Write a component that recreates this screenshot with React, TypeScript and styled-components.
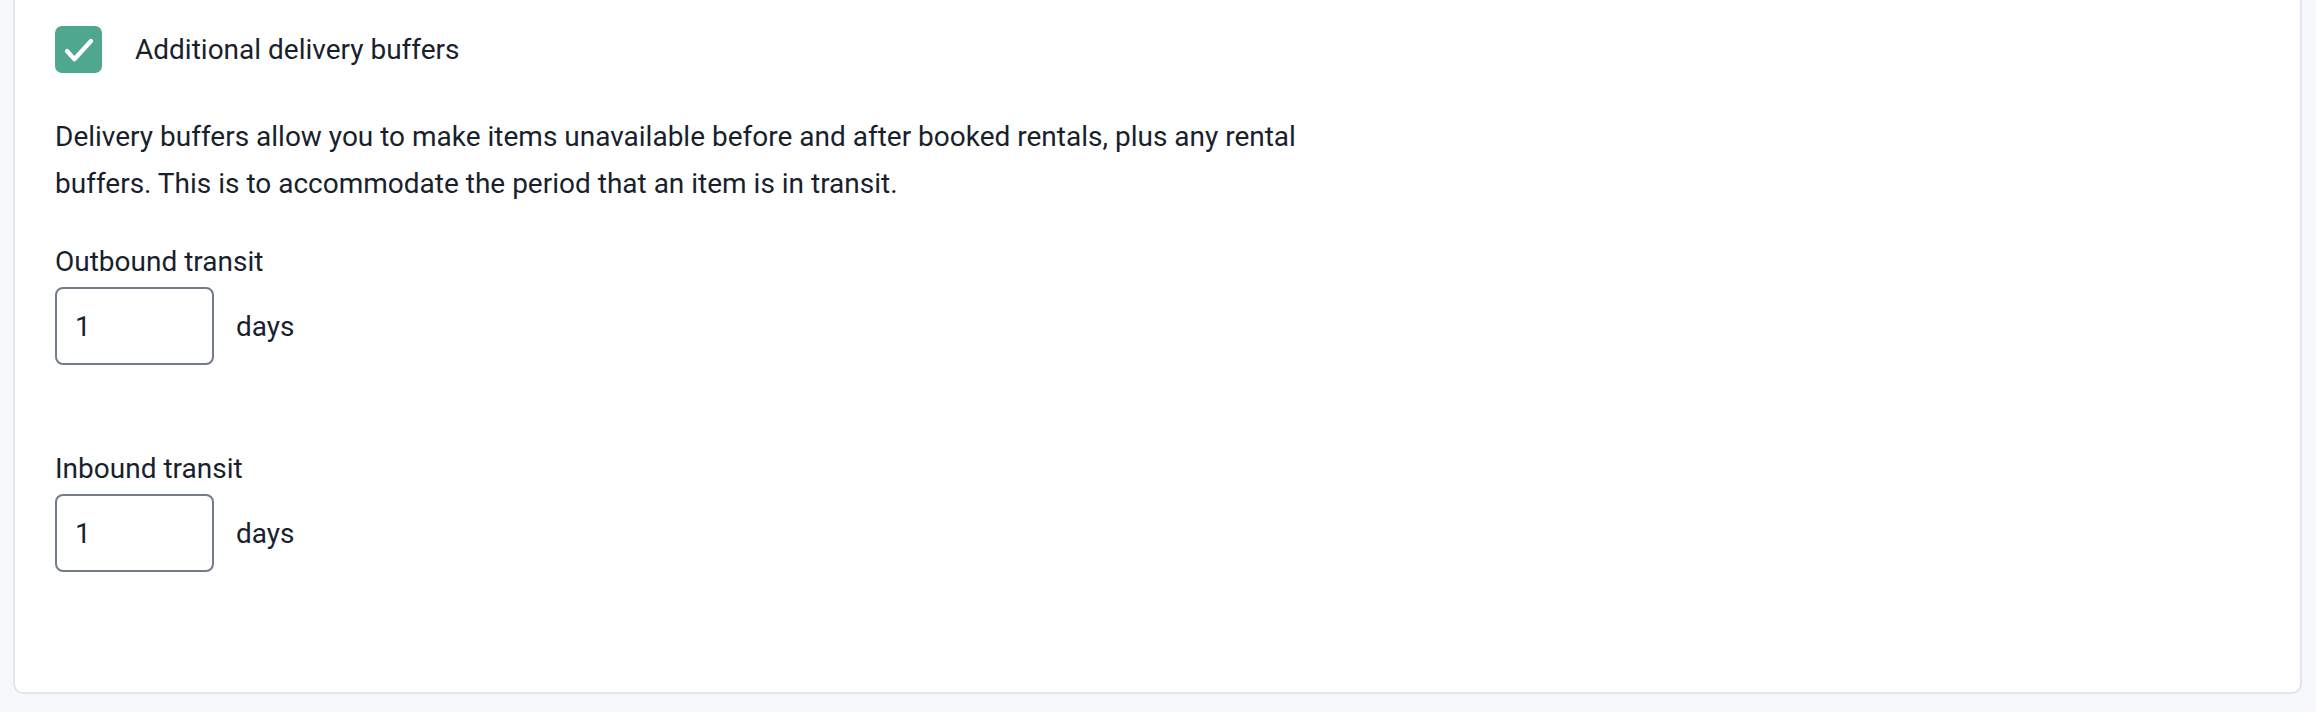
import React from "react";
import styled, { createGlobalStyle } from "styled-components";

const GlobalStyle = createGlobalStyle`
  html, body {
    margin: 0;
    padding: 0;
    background: #f7f8fa;
    font-family: Roboto, "Liberation Sans", Arial, sans-serif;
    color: #1a1f2d;
  }
`;

const Page = styled.div`
  padding: 0 14px 17px 13px;
`;

const Card = styled.section`
  background: #ffffff;
  border: 2px solid #e2e6ee;
  border-top: none;
  border-radius: 0 0 10px 10px;
  padding: 26px 40px 120px 40px;
`;

const CheckRow = styled.label`
  display: flex;
  align-items: center;
  gap: 33px;
`;

const CheckBox = styled.span`
  width: 47px;
  height: 47px;
  border-radius: 7px;
  background: #4fa78f;
  display: flex;
  align-items: center;
  justify-content: center;
  flex-shrink: 0;
`;

const CheckLabel = styled.span`
  font-size: 28px;
  line-height: 47px;
  color: #1a1f2d;
`;

const Description = styled.p`
  margin: 40px 0 35px 0;
  font-size: 28px;
  line-height: 47px;
  max-width: 1300px;
  color: #1a1f2d;
`;

const Field = styled.div<{ $spaced?: boolean }>`
  display: flex;
  flex-direction: column;
  margin-top: ${(p) => (p.$spaced ? "84px" : "0")};
`;

const FieldLabel = styled.div`
  font-size: 28px;
  line-height: 40px;
  margin-bottom: 5px;
  color: #1a1f2d;
`;

const InputRow = styled.div`
  display: flex;
  align-items: center;
  gap: 22px;
`;

const NumberInput = styled.input`
  box-sizing: border-box;
  width: 159px;
  height: 78px;
  border: 2px solid #737c8f;
  border-radius: 8px;
  padding: 0 18px;
  font-family: Roboto, "Liberation Sans", Arial, sans-serif;
  font-size: 28px;
  color: #1a1f2d;
  background: #fff;
  outline: none;
`;

const Unit = styled.span`
  font-size: 28px;
  color: #1a1f2d;
`;

export default function App() {
  return (
    <>
      <GlobalStyle />
      <Page>
        <Card>
          <CheckRow>
            <CheckBox>
              <svg width="40" height="40" viewBox="0 0 24 24" fill="none">
                <path
                  d="M4.8 12.6l4.4 4.9L19.2 6.6"
                  stroke="#ffffff"
                  strokeWidth="2.6"
                  strokeLinecap="round"
                  strokeLinejoin="round"
                />
              </svg>
            </CheckBox>
            <CheckLabel>Additional delivery buffers</CheckLabel>
          </CheckRow>
          <Description>
            Delivery buffers allow you to make items unavailable before and after booked rentals, plus any rental
            buffers. This is to accommodate the period that an item is in transit.
          </Description>
          <Field>
            <FieldLabel>Outbound transit</FieldLabel>
            <InputRow>
              <NumberInput defaultValue="1" />
              <Unit>days</Unit>
            </InputRow>
          </Field>
          <Field $spaced>
            <FieldLabel>Inbound transit</FieldLabel>
            <InputRow>
              <NumberInput defaultValue="1" />
              <Unit>days</Unit>
            </InputRow>
          </Field>
        </Card>
      </Page>
    </>
  );
}
